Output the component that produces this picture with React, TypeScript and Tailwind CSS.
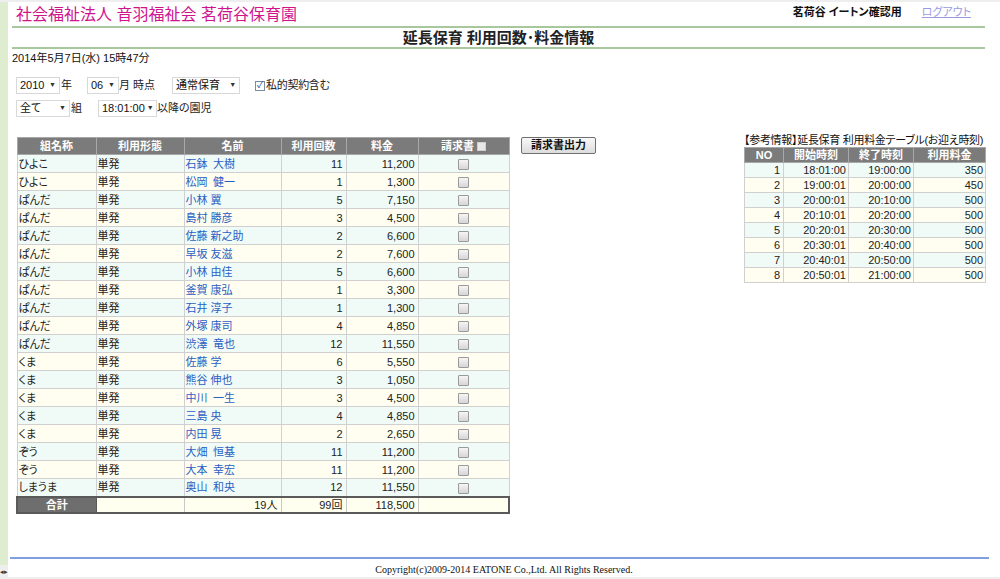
import React from "react";

type Row = [string, string, string, string, string];

const rows: Row[] = [
  ["ひよこ", "単発", "石鉢\u2002大樹", "11", "11,200"],
  ["ひよこ", "単発", "松岡\u2002健一", "1", "1,300"],
  ["ぱんだ", "単発", "小林 翼", "5", "7,150"],
  ["ぱんだ", "単発", "島村 勝彦", "3", "4,500"],
  ["ぱんだ", "単発", "佐藤 新之助", "2", "6,600"],
  ["ぱんだ", "単発", "早坂 友滋", "2", "7,600"],
  ["ぱんだ", "単発", "小林 由佳", "5", "6,600"],
  ["ぱんだ", "単発", "釜賀 康弘", "1", "3,300"],
  ["ぱんだ", "単発", "石井 淳子", "1", "1,300"],
  ["ぱんだ", "単発", "外塚 康司", "4", "4,850"],
  ["ぱんだ", "単発", "渋澤\u2002竜也", "12", "11,550"],
  ["くま", "単発", "佐藤 学", "6", "5,550"],
  ["くま", "単発", "熊谷 伸也", "3", "1,050"],
  ["くま", "単発", "中川\u2002一生", "3", "4,500"],
  ["くま", "単発", "三島 央", "4", "4,850"],
  ["くま", "単発", "内田 晃", "2", "2,650"],
  ["ぞう", "単発", "大畑\u2002恒基", "11", "11,200"],
  ["ぞう", "単発", "大本\u2002幸宏", "11", "11,200"],
  ["しまうま", "単発", "奥山\u2002和央", "12", "11,550"],
];

const fees: [string, string, string, string][] = [
  ["1", "18:01:00", "19:00:00", "350"],
  ["2", "19:00:01", "20:00:00", "450"],
  ["3", "20:00:01", "20:10:00", "500"],
  ["4", "20:10:01", "20:20:00", "500"],
  ["5", "20:20:01", "20:30:00", "500"],
  ["6", "20:30:01", "20:40:00", "500"],
  ["7", "20:40:01", "20:50:00", "500"],
  ["8", "20:50:01", "21:00:00", "500"],
];

function Box() {
  return (
    <span className="inline-block w-[11px] h-[11px] border border-[#9a9a9a] rounded-[1px] bg-gradient-to-b from-[#f6f6f6] to-[#d6d6d6] align-middle" />
  );
}

function Sel({ className, value }: { className: string; value: string }) {
  return (
    <div
      className={
        "shrink-0 flex items-center justify-between h-[17px] border border-[#d8d8d8] bg-white pl-[3px] pr-[3px] text-[11px] text-[#111] " +
        className
      }
    >
      <span className="whitespace-nowrap">{value}</span>
      <span className="text-[7px] text-[#333] ml-[2px]">▼</span>
    </div>
  );
}

export default function App() {
  return (
    <div className="w-[1000px] h-[579px] flex overflow-hidden bg-white font-['Liberation_Sans','Noto_Sans_CJK_JP',sans-serif] text-[11px] text-[#222] [font-feature-settings:'palt']">
      <div className="w-[8px] flex flex-col">
        <div className="h-[2px] bg-[#eeeeee]" />
        <div className="flex-1 bg-[#deedcf]" />
        <div className="h-[14px] bg-[#eeeeee] text-[7px] leading-[14px] text-[#333]">◂▸</div>
      </div>
      <div className="flex-1 flex flex-col">
        <div className="h-[2px] bg-[#eeeeee]" />
        <div className="ml-[4px] w-[973px] flex flex-col">
          <div className="h-[24px] flex items-start justify-between pl-[4px]">
            <div className="text-[16px] text-[#d0148e] leading-[20px] pt-[3px]">
              社会福祉法人 音羽福祉会 茗荷谷保育園
            </div>
            <div className="flex items-center mr-[14px] pt-[3px]">
              <span className="font-bold text-[11px] text-[#111] leading-[14px]">茗荷谷 イートン確認用</span>
              <span className="ml-[20px] text-[11px] text-[#9a9ae0] underline leading-[14px]">ログアウト</span>
            </div>
          </div>
          <div className="h-[2px] bg-[#a8c79c]" />
          <div className="h-[19px] flex items-center justify-center">
            <span className="text-[15px] font-bold text-[#222] leading-[19px]">延長保育 利用回数･料金情報</span>
          </div>
          <div className="h-[2px] bg-[#a8c79c]" />
          <div className="mt-[2px] leading-[14px] text-[11px] text-[#111]">2014年5月7日(水) 15時47分</div>

          <div className="ml-[4px] mt-[12px] flex items-center h-[17px] whitespace-nowrap">
            <Sel className="w-[44px]" value="2010" />
            <span className="ml-[1px] w-[11px] shrink-0">年</span>
            <Sel className="ml-[15px] w-[32px]" value="06" />
            <span className="shrink-0">月 時点</span>
            <Sel className="ml-[17px] w-[68px]" value="通常保育" />
            <span className="ml-[15px] shrink-0 w-[10px] h-[10px] border border-[#7a8ba8] bg-white flex items-center justify-center text-[9px] leading-none text-[#2a4a8a]">✓</span>
            <span className="ml-[1px] tracking-[-0.3px] shrink-0">私的契約含む</span>
          </div>
          <div className="ml-[4px] mt-[6px] flex items-center h-[17px] whitespace-nowrap">
            <Sel className="w-[54px]" value="全て" />
            <span className="ml-[1px] w-[12px] shrink-0">組</span>
            <Sel className="ml-[15px] w-[59px]" value="18:01:00" />
            <span className="shrink-0">以降の園児</span>
          </div>

          <div className="flex items-start mt-[17px]">
            <table className="ml-[4px] mt-[3px] table-fixed border-collapse w-[492px] text-[11px]">
              <colgroup>
                <col className="w-[79px]" />
                <col className="w-[88px]" />
                <col className="w-[97px]" />
                <col className="w-[65px]" />
                <col className="w-[72px]" />
                <col className="w-[91px]" />
              </colgroup>
              <thead>
                <tr className="bg-[#7b7b7b] text-white font-bold">
                  <th className="h-[17px] border border-[#a8a8a8] p-0 text-center leading-[16px]">組名称</th>
                  <th className="h-[17px] border border-[#a8a8a8] p-0 text-center leading-[16px]">利用形態</th>
                  <th className="h-[17px] border border-[#a8a8a8] p-0 text-center leading-[16px]">名前</th>
                  <th className="h-[17px] border border-[#a8a8a8] p-0 text-center leading-[16px]">利用回数</th>
                  <th className="h-[17px] border border-[#a8a8a8] p-0 text-center leading-[16px]">料金</th>
                  <th className="h-[17px] border border-[#a8a8a8] p-0 text-center leading-[16px]">
                    請求書 <span className="inline-block w-[9px] h-[9px] bg-[#e8e8e8] border border-[#cfcfcf] align-[-1px]" />
                  </th>
                </tr>
              </thead>
              <tbody>
                {rows.map((r, i) => (
                  <tr key={i} className={i % 2 === 0 ? "bg-[#f0fbf7]" : "bg-[#fffef0]"}>
                    <td className="h-[18px] border border-[#d0d0d0] px-[1px] py-0 leading-[16px]">{r[0]}</td>
                    <td className="h-[18px] border border-[#d0d0d0] px-[1px] py-0 leading-[16px]">{r[1]}</td>
                    <td className="h-[18px] border border-[#d0d0d0] px-[1px] py-0 leading-[16px] text-[#2a5fc4] whitespace-pre">{r[2]}</td>
                    <td className="h-[18px] border border-[#d0d0d0] pr-[3px] py-0 leading-[16px] text-right">{r[3]}</td>
                    <td className="h-[18px] border border-[#d0d0d0] pr-[3px] py-0 leading-[16px] text-right">{r[4]}</td>
                    <td className="h-[18px] border border-[#d0d0d0] p-0 leading-[16px] text-center"><Box /></td>
                  </tr>
                ))}
                <tr className="bg-[#fffff0]">
                  <td className="h-[16px] border-y-2 border-l-2 border-r border-[#5a5a5a] bg-[#6e6e6e] text-white font-bold text-center p-0 leading-[14px]">合計</td>
                  <td className="h-[16px] border-y-2 border-x border-y-[#5a5a5a] border-x-[#c8c8c8] p-0" />
                  <td className="h-[16px] border-y-2 border-x border-y-[#5a5a5a] border-x-[#c8c8c8] pr-[3px] py-0 text-right leading-[14px]">19人</td>
                  <td className="h-[16px] border-y-2 border-x border-y-[#5a5a5a] border-x-[#c8c8c8] pr-[3px] py-0 text-right leading-[14px]">99回</td>
                  <td className="h-[16px] border-y-2 border-x border-y-[#5a5a5a] border-x-[#c8c8c8] pr-[3px] py-0 text-right leading-[14px]">118,500</td>
                  <td className="h-[16px] border-y-2 border-r-2 border-l border-y-[#5a5a5a] border-r-[#5a5a5a] border-l-[#c8c8c8] p-0" />
                </tr>
              </tbody>
            </table>

            <button className="ml-[11px] mt-[3px] w-[75px] h-[17px] border border-[#707070] rounded-[2px] bg-gradient-to-b from-[#f8f8f8] to-[#dcdcdc] text-[11px] font-bold text-[#111] leading-[15px]">
              請求書出力
            </button>

            <div className="ml-auto w-[241px] flex flex-col">
              <div className="text-[11px] leading-[13px] text-[#111] whitespace-nowrap tracking-[-0.3px]">【参考情報】延長保育 利用料金テーブル(お迎え時刻)</div>
              <table className="table-fixed border-collapse w-[241px] text-[11px]">
                <colgroup>
                  <col className="w-[39px]" />
                  <col className="w-[65px]" />
                  <col className="w-[65px]" />
                  <col className="w-[72px]" />
                </colgroup>
                <thead>
                  <tr className="bg-[#7b7b7b] text-white font-bold">
                    <th className="h-[15px] border border-[#a8a8a8] p-0 text-center leading-[14px]">NO</th>
                    <th className="h-[15px] border border-[#a8a8a8] p-0 text-center leading-[14px]">開始時刻</th>
                    <th className="h-[15px] border border-[#a8a8a8] p-0 text-center leading-[14px]">終了時刻</th>
                    <th className="h-[15px] border border-[#a8a8a8] p-0 text-center leading-[14px]">利用料金</th>
                  </tr>
                </thead>
                <tbody>
                  {fees.map((f, i) => (
                    <tr key={i} className={i % 2 === 0 ? "bg-[#f0fbf7]" : "bg-[#fffef0]"}>
                      <td className="h-[15px] border border-[#d0d0d0] pr-[3px] py-0 text-right leading-[13px]">{f[0]}</td>
                      <td className="h-[15px] border border-[#d0d0d0] pr-[2px] py-0 text-right leading-[13px]">{f[1]}</td>
                      <td className="h-[15px] border border-[#d0d0d0] pr-[2px] py-0 text-right leading-[13px]">{f[2]}</td>
                      <td className="h-[15px] border border-[#d0d0d0] pr-[2px] py-0 text-right leading-[13px]">{f[3]}</td>
                    </tr>
                  ))}
                </tbody>
              </table>
            </div>
          </div>
        </div>

        <div className="flex-1" />
        <div className="ml-[2px] w-[979px] h-[2px] bg-[#7fa0e0]" />
        <div className="h-[18px] pt-[3px] flex items-center justify-center font-['Liberation_Serif',serif] text-[10px] text-[#111]">
          Copyright(c)2009-2014 EATONE Co.,Ltd. All Rights Reserved.
        </div>
        <div className="h-[2px] bg-[#eeeeee]" />
      </div>
    </div>
  );
}
